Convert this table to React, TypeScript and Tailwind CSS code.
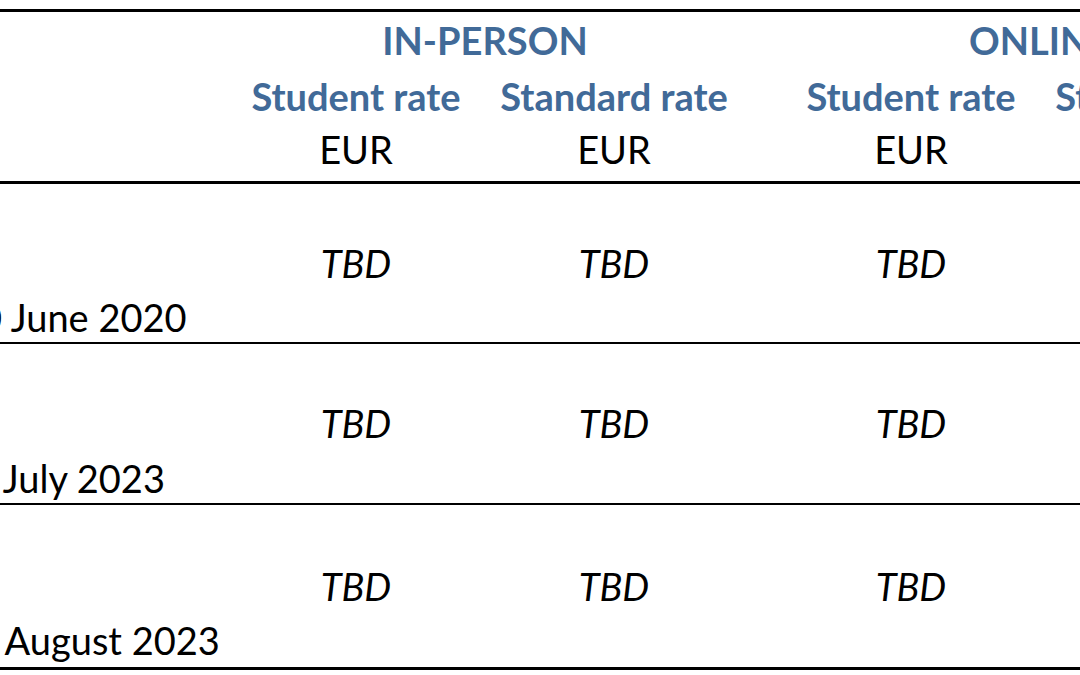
import React from "react";

const cols = "grid grid-cols-[300px_258px_258px_39px_258px_258px]";

function DataRow({ date, pad, h, border, pb }: { date: string; pad: string; h: string; border: string; pb: string }) {
  return (
    <div className={`${cols} ${h} ${border} border-black`}>
      <div className={`flex items-end ${pad} ${pb} leading-[46px] whitespace-nowrap`}>{date}</div>
      <div className="flex items-center justify-center italic">TBD</div>
      <div className="flex items-center justify-center italic">TBD</div>
      <div />
      <div className="flex items-center justify-center italic">TBD</div>
      <div className="flex items-center justify-center italic">TBD</div>
    </div>
  );
}

export default function App() {
  return (
    <div
      className="w-[1080px] h-[675px] overflow-hidden bg-white text-black text-[38px]"
      style={{ fontFamily: "Lato, 'Open Sans', sans-serif" }}
    >
      <div className="-ml-[73px] w-[1371px] pt-[9px]">
        <div className="border-t-[3px] border-b-[3px] border-black h-[175px]">
          <div className={`${cols} h-[42px] items-center font-bold text-[#416a98]`}>
            <div />
            <div className="col-span-2 text-center">IN-PERSON</div>
            <div />
            <div className="col-span-2 text-center">ONLINE</div>
          </div>
          <div className={`${cols} h-[52px] mt-[14px] items-center font-bold text-[#416a98] whitespace-nowrap`}>
            <div />
            <div className="text-center">Student rate</div>
            <div className="text-center">Standard rate</div>
            <div />
            <div className="text-center">Student rate</div>
            <div className="text-center">Standard rate</div>
          </div>
          <div className={`${cols} h-[52px] mt-[1px] items-center`}>
            <div />
            <div className="text-center">EUR</div>
            <div className="text-center">EUR</div>
            <div />
            <div className="text-center">EUR</div>
            <div className="text-center">EUR</div>
          </div>
        </div>
        <DataRow date="30 June 2020" pad="pl-[31px]" pb="pb-[2px]" h="h-[160px]" border="border-b-2" />
        <DataRow date="31 July 2023" pad="pl-[23px]" pb="pb-[2px]" h="h-[161px]" border="border-b-2" />
        <DataRow date="31 August 2023" pad="pl-[25px]" pb="pb-[4px]" h="h-[165px]" border="border-b-[3px]" />
      </div>
    </div>
  );
}
